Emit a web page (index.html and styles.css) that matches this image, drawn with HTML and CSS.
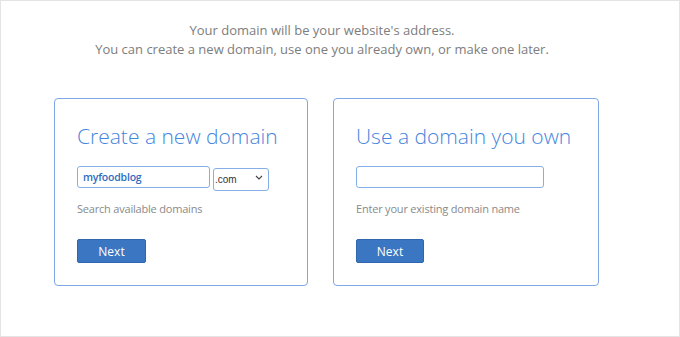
FILE: index.html
```html
<!DOCTYPE html>
<html lang="en">
<head>
<meta charset="utf-8">
<title>Choose a domain</title>
<link rel="stylesheet" href="styles.css">
</head>
<body>
<div class="page">
  <div class="intro">
    <p>Your domain will be your website's address.</p>
    <p>You can create a new domain, use one you already own, or make one later.</p>
  </div>
  <div class="cards">
    <section class="card card-new">
      <h2 class="card-title">Create a new domain</h2>
      <div class="field-row">
        <input class="text-input text-input-new" type="text" value="myfoodblog">
        <div class="select-wrap">
          <select class="tld-select">
            <option>.com</option>
          </select>
          <svg class="chevron" width="8" height="5" viewBox="0 0 8 5"><path d="M1 1 L4 4 L7 1" fill="none" stroke="#444" stroke-width="1.1"/></svg>
        </div>
      </div>
      <p class="hint">Search available domains</p>
      <button class="btn">Next</button>
    </section>
    <section class="card card-own">
      <h2 class="card-title">Use a domain you own</h2>
      <div class="field-row">
        <input class="text-input text-input-own" type="text" value="">
      </div>
      <p class="hint">Enter your existing domain name</p>
      <button class="btn">Next</button>
    </section>
  </div>
</div>
</body>
</html>
```
FILE: styles.css
```css
* { box-sizing: border-box; }
html, body { margin: 0; padding: 0; background: #fff; }
.page {
  width: 680px;
  height: 337px;
  border: 1px solid #e4e4e4;
  font-family: "Open Sans", "Liberation Sans", sans-serif;
  overflow: hidden;
}
.intro {
  padding: 20px 36px 0 0;
  text-align: center;
  color: #7d7d7d;
  font-size: 13px;
  line-height: 19px;
}
.intro p { margin: 0; }
.cards {
  display: flex;
  gap: 25px;
  margin-top: 39px;
  padding-left: 53px;
}
.card {
  border: 1px solid #7ea7e4;
  border-radius: 4px;
  height: 188px;
  padding: 22px 0 0 22px;
}
.card-new { width: 254px; }
.card-own { width: 266px; }
.card-title {
  margin: 0;
  font-weight: 300;
  font-size: 21px;
  line-height: 30px;
  color: #4585de;
}
.field-row {
  display: flex;
  gap: 3px;
  margin-top: 15px;
  height: 23px;
}
.text-input {
  height: 22px;
  border: 1px solid #86aee6;
  border-radius: 3px;
  padding: 0 5px;
  font-family: "Open Sans", sans-serif;
  font-size: 10.5px;
  font-weight: 600;
  letter-spacing: -0.2px;
  color: #2f6cc0;
  outline: none;
}
.text-input-new { width: 133px; }
.text-input-own { width: 188px; }
.select-wrap { position: relative; width: 56px; height: 23px; }
.tld-select {
  appearance: none;
  -webkit-appearance: none;
  width: 56px;
  height: 23px;
  border: 1px solid #86aee6;
  border-radius: 3px;
  background: #fff;
  padding: 0 0 0 1px;
  font-family: "Liberation Sans", sans-serif;
  font-size: 10px;
  color: #333;
  outline: none;
}
.chevron { position: absolute; right: 6px; top: 9px; }
.hint {
  margin: 11px 0 0;
  font-size: 11px;
  letter-spacing: -0.2px;
  line-height: 18px;
  color: #8a8a8a;
}
.btn {
  display: block;
  margin-top: 21px;
  width: 69px;
  height: 24px;
  border: 1px solid #2f66ad;
  border-radius: 2px;
  background: #3a76c2;
  color: #fff;
  font-family: "Open Sans", sans-serif;
  font-size: 12px;
  padding: 0;
}
.card-own .btn { width: 68px; }
```
